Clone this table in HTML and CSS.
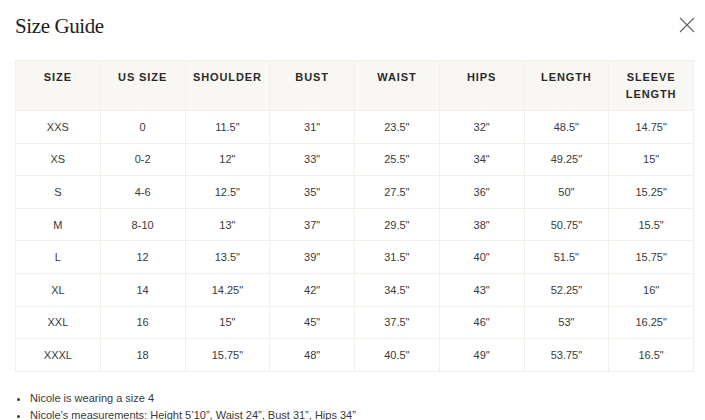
FILE: index.html
```html
<!DOCTYPE html>
<html>
<head>
<meta charset="utf-8">
<link rel="stylesheet" href="styles.css">
</head>
<body>
<div class="modal">
  <div class="modal-head">
    <h1 class="title">Size Guide</h1>
    <button class="close" aria-label="Close">
      <svg width="16" height="16" viewBox="0 0 16 16"><path d="M1 1L15 15M15 1L1 15" stroke="#666" stroke-width="1.2" fill="none"/></svg>
    </button>
  </div>
  <table class="sizes">
    <thead>
      <tr><th>Size</th><th>US Size</th><th>Shoulder</th><th>Bust</th><th>Waist</th><th>Hips</th><th>Length</th><th>Sleeve Length</th></tr>
    </thead>
    <tbody>
      <tr><td>XXS</td><td>0</td><td>11.5"</td><td>31"</td><td>23.5"</td><td>32"</td><td>48.5"</td><td>14.75"</td></tr>
      <tr><td>XS</td><td>0-2</td><td>12"</td><td>33"</td><td>25.5"</td><td>34"</td><td>49.25"</td><td>15"</td></tr>
      <tr><td>S</td><td>4-6</td><td>12.5"</td><td>35"</td><td>27.5"</td><td>36"</td><td>50"</td><td>15.25"</td></tr>
      <tr><td>M</td><td>8-10</td><td>13"</td><td>37"</td><td>29.5"</td><td>38"</td><td>50.75"</td><td>15.5"</td></tr>
      <tr><td>L</td><td>12</td><td>13.5"</td><td>39"</td><td>31.5"</td><td>40"</td><td>51.5"</td><td>15.75"</td></tr>
      <tr><td>XL</td><td>14</td><td>14.25"</td><td>42"</td><td>34.5"</td><td>43"</td><td>52.25"</td><td>16"</td></tr>
      <tr><td>XXL</td><td>16</td><td>15"</td><td>45"</td><td>37.5"</td><td>46"</td><td>53"</td><td>16.25"</td></tr>
      <tr><td>XXXL</td><td>18</td><td>15.75"</td><td>48"</td><td>40.5"</td><td>49"</td><td>53.75"</td><td>16.5"</td></tr>
    </tbody>
  </table>
  <ul class="notes">
    <li>Nicole is wearing a size 4</li>
    <li>Nicole’s measurements: Height 5’10”, Waist 24”, Bust 31”, Hips 34”</li>
  </ul>
</div>
</body>
</html>
```
FILE: styles.css
```css
* { box-sizing: border-box; }
html, body { margin: 0; padding: 0; background: #fff; }
body { font-family: "Liberation Sans", Arial, sans-serif; color: #333; }
.modal { padding: 0 11px 0 15px; }
.modal-head {
  display: flex;
  justify-content: space-between;
  align-items: flex-start;
  height: 60px;
}
.title {
  margin: 14px 0 0;
  font-family: "Liberation Serif", "Times New Roman", serif;
  font-weight: normal;
  font-size: 21px;
  letter-spacing: -0.4px;
  color: #1e1e1e;
}
.close {
  margin: 17px -1px 0 0;
  padding: 0;
  border: 0;
  background: none;
  width: 16px;
  height: 16px;
  display: flex;
}
.sizes {
  width: 679px;
  border-collapse: collapse;
  table-layout: fixed;
}
.sizes th, .sizes td {
  border: 1px solid #f3efe6;
  text-align: center;
}
.sizes th {
  background: #f9f7f3;
  font-size: 11px;
  font-weight: bold;
  letter-spacing: 0.9px;
  text-transform: uppercase;
  color: #2a2a2a;
  vertical-align: top;
  line-height: 17px;
  padding: 8px 4px 7px;
  height: 50px;
}
.sizes td {
  font-size: 11px;
  color: #3a3a3a;
  height: 32.6px;
  padding: 0 4px;
}
.notes {
  margin: 18px 0 0;
  padding: 0 0 0 15px;
  font-size: 11px;
  line-height: 17px;
  color: #3a3a3a;
}
```
